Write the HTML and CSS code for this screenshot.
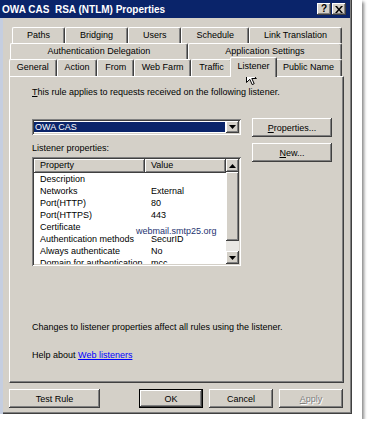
FILE: index.html
```html
<!DOCTYPE html>
<html lang="en">
<head>
    <meta charset="UTF-8">
    <title>OWA CAS RSA (NTLM) Properties</title>
    <link rel="stylesheet" href="styles.css">
</head>
<body>
<div class="shot">
    <div class="window">
        <div class="titlebar">
            <span class="title">OWA CAS&nbsp; RSA (NTLM) Properties</span>
            <div class="caption-buttons">
                <span class="cap-btn">?</span>
                <span class="cap-btn">
                    <svg width="8" height="7" viewBox="0 0 8 7"><path d="M0 0h2l2 2.5L6 0h2L5 3.5 8 7H6L4 4.5 2 7H0l3-3.5z" fill="#000"/></svg>
                </span>
            </div>
        </div>

        <div class="body">
            <div class="tab-row row1">
                <span class="tab">Paths</span>
                <span class="tab">Bridging</span>
                <span class="tab">Users</span>
                <span class="tab">Schedule</span>
                <span class="tab">Link Translation</span>
            </div>
            <div class="tab-row row2">
                <span class="tab">Authentication Delegation</span>
                <span class="tab">Application Settings</span>
            </div>
            <div class="tab-row row3">
                <span class="tab">General</span>
                <span class="tab">Action</span>
                <span class="tab">From</span>
                <span class="tab">Web Farm</span>
                <span class="tab">Traffic</span>
                <span class="tab active">Listener</span>
                <span class="tab">Public Name</span>
            </div>

            <div class="panel">
                <p class="intro"><u>T</u>his rule applies to requests received on the following listener.</p>

                <div class="chooser">
                    <div class="left-col">
                        <div class="combo">
                            <span class="combo-value">OWA CAS</span>
                            <span class="combo-btn">
                                <svg width="7" height="4" viewBox="0 0 7 4"><path d="M0 0h7L3.5 4z" fill="#000"/></svg>
                            </span>
                        </div>
                        <div class="list-label">Listener properties:</div>
                        <div class="listview">
                            <div class="list-body">
                                <div class="list-head">
                                    <span class="col-prop">Property</span>
                                    <span class="col-val">Value</span>
                                </div>
                                <div class="list-row"><span class="col-prop">Description</span><span class="col-val"></span></div>
                                <div class="list-row"><span class="col-prop">Networks</span><span class="col-val">External</span></div>
                                <div class="list-row"><span class="col-prop">Port(HTTP)</span><span class="col-val">80</span></div>
                                <div class="list-row"><span class="col-prop">Port(HTTPS)</span><span class="col-val">443</span></div>
                                <div class="list-row"><span class="col-prop">Certificate</span><span class="col-val"></span></div>
                                <div class="list-row"><span class="col-prop">Authentication methods</span><span class="col-val">SecurID</span></div>
                                <div class="list-row"><span class="col-prop">Always authenticate</span><span class="col-val">No</span></div>
                                <div class="list-row"><span class="col-prop">Domain for authentication</span><span class="col-val">mcc</span></div>
                            </div>
                            <div class="scrollbar">
                                <span class="sb-btn">
                                    <svg width="7" height="4" viewBox="0 0 7 4"><path d="M0 4h7L3.5 0z" fill="#000"/></svg>
                                </span>
                                <span class="sb-thumb"></span>
                                <span class="sb-track"></span>
                                <span class="sb-btn">
                                    <svg width="7" height="4" viewBox="0 0 7 4"><path d="M0 0h7L3.5 4z" fill="#000"/></svg>
                                </span>
                            </div>
                            <span class="hover-text">webmail.smtp25.org</span>
                        </div>
                    </div>
                    <div class="right-col">
                        <span class="btn"><u>P</u>roperties...</span>
                        <span class="btn"><u>N</u>ew...</span>
                    </div>
                </div>

                <p class="note">Changes to listener properties affect all rules using the listener.</p>
                <p class="help">Help about <a href="#">Web listeners</a></p>
            </div>

            <div class="actions">
                <span class="btn test">Test Rule</span>
                <span class="btn default">OK</span>
                <span class="btn">Cancel</span>
                <span class="btn disabled"><u>A</u>pply</span>
            </div>
        </div>

        <svg class="cursor" width="11" height="17" viewBox="0 0 11 17">
            <path d="M0.5 0.5v14l3.3-3.2 2.4 5.3 2-0.9-2.4-5.2h4.6z" fill="#fff" stroke="#000" stroke-width="1"/>
        </svg>
    </div>
</div>
</body>
</html>
```

FILE: styles.css
```css
body {
    margin: 0;
    background: #fff;
    font-family: "Liberation Sans", Arial, sans-serif;
    font-size: 9px;
    color: #000;
}
.shot {
    width: 362px;
    height: 419px;
    background: #fff;
    box-shadow: 2px 2px 3px #8a8a8a;
}
.window {
    position: relative;
    width: 352px;
    height: 414px;
    background: #d4d0c8;
    box-shadow: inset -1px -1px #404040, inset -2px -2px #808080;
    display: flex;
    flex-direction: column;
    box-sizing: border-box;
}

/* title bar */
.titlebar {
    height: 18px;
    width: 350px;
    background: #0a246a;
    display: flex;
    align-items: center;
    justify-content: space-between;
    padding: 0 4px 0 2px;
    box-sizing: border-box;
    flex: none;
}
.title {
    color: #fff;
    font-weight: bold;
    font-size: 10px;
}
.caption-buttons {
    display: flex;
    gap: 1px;
}
.cap-btn {
    width: 14px;
    height: 12px;
    background: #d4d0c8;
    box-shadow: inset -1px -1px #404040, inset 1px 1px #fff, inset -2px -2px #808080;
    display: flex;
    align-items: center;
    justify-content: center;
    font-weight: bold;
    font-size: 10px;
    line-height: 12px;
}

/* body and tabs */
.body {
    flex: 1;
    border-left: 3px solid #c5cee0;
    padding: 9px 8px 0 6px;
}
.tab-row {
    display: flex;
    height: 16px;
    margin-right: 2px;
}
.row1 { margin-left: 3px; }
.row2 { margin-left: 1px; }
.row3 { height: 17px; }
.tab {
    flex: 1 1 auto;
    border: 1px solid;
    border-color: #fff #404040 transparent #fff;
    border-bottom: none;
    border-radius: 2px 2px 0 0;
    box-shadow: inset -1px 0 #808080;
    text-align: center;
    line-height: 15px;
    white-space: nowrap;
}
.tab.active {
    position: relative;
    z-index: 1;
    margin: -2px -2px -1px;
    background: #d4d0c8;
    line-height: 16px;
}

/* panel */
.panel {
    height: 307px;
    border: 1px solid;
    border-color: #fff #404040 #404040 #fff;
    box-shadow: inset -1px -1px #808080;
    box-sizing: border-box;
    padding: 9px 0 0 22px;
}
.panel p {
    margin: 0;
    line-height: 12px;
}
.chooser {
    display: grid;
    grid-template-columns: 209px 80px;
    column-gap: 11px;
    margin-top: 20px;
}
.left-col {
    padding-top: 1px;
}
.right-col {
    display: flex;
    flex-direction: column;
    gap: 6px;
}

.combo {
    height: 16px;
    background: #fff;
    box-shadow: inset 1px 1px #808080, inset -1px -1px #fff, inset 2px 2px #404040, inset -2px -2px #d4d0c8;
    display: flex;
    padding: 2px;
    box-sizing: border-box;
}
.combo-value {
    flex: 1;
    margin: 1px 1px 1px 0;
    background: #0a246a;
    color: #fff;
    line-height: 10px;
    padding-left: 1px;
}
.combo-btn {
    width: 13px;
    background: #d4d0c8;
    box-shadow: inset -1px -1px #404040, inset 1px 1px #fff, inset -2px -2px #808080;
    display: flex;
    align-items: center;
    justify-content: center;
}

.list-label {
    margin-top: 7px;
    line-height: 12px;
}
.listview {
    position: relative;
    margin-top: 3px;
    height: 109px;
    background: #fff;
    box-shadow: inset 1px 1px #808080, inset -1px -1px #fff, inset 2px 2px #404040, inset -2px -2px #d4d0c8;
    padding: 2px;
    box-sizing: border-box;
    display: flex;
}
.list-body {
    flex: 1;
    overflow: hidden;
}
.list-head {
    display: flex;
    height: 14px;
    line-height: 13px;
}
.list-head span {
    background: #d4d0c8;
    box-shadow: inset -1px -1px #404040, inset 1px 1px #fff, inset -2px -2px #808080;
    padding-left: 6px;
    box-sizing: border-box;
}
.list-row {
    display: flex;
    height: 12px;
    line-height: 12px;
}
.list-row span {
    padding-left: 6px;
    box-sizing: border-box;
    white-space: nowrap;
}
.col-prop {
    width: 111px;
    flex: none;
}
.col-val {
    flex: 1;
}
.scrollbar {
    width: 13px;
    display: flex;
    flex-direction: column;
}
.sb-btn {
    height: 13px;
    background: #d4d0c8;
    box-shadow: inset -1px -1px #404040, inset 1px 1px #fff, inset -2px -2px #808080;
    display: flex;
    align-items: center;
    justify-content: center;
    flex: none;
}
.sb-thumb {
    height: 69px;
    background: #d4d0c8;
    box-shadow: inset -1px -1px #404040, inset 1px 1px #fff, inset -2px -2px #808080;
    flex: none;
}
.sb-track {
    flex: 1;
    background: #e9e7e3;
}
.hover-text {
    position: absolute;
    left: 104px;
    top: 68px;
    color: #1e3270;
    line-height: 12px;
    white-space: nowrap;
}

.note {
    margin-top: 55px !important;
}
.help {
    margin-top: 16px !important;
}
.help a {
    color: #0000ff;
}

/* buttons */
.btn {
    height: 19px;
    background: #d4d0c8;
    box-shadow: inset -1px -1px #404040, inset 1px 1px #fff, inset -2px -2px #808080;
    display: flex;
    align-items: center;
    justify-content: center;
    box-sizing: border-box;
}
.actions {
    display: flex;
    gap: 6px;
    margin-top: 6px;
    padding-right: 1px;
}
.actions .btn {
    width: 64px;
}
.actions .btn.test {
    width: 91px;
    margin-right: auto;
}
.btn.default {
    border: 1px solid #000;
}
.btn.disabled {
    color: #808080;
    text-shadow: 1px 1px #fff;
}

.cursor {
    position: absolute;
    left: 246px;
    top: 68px;
}
```
